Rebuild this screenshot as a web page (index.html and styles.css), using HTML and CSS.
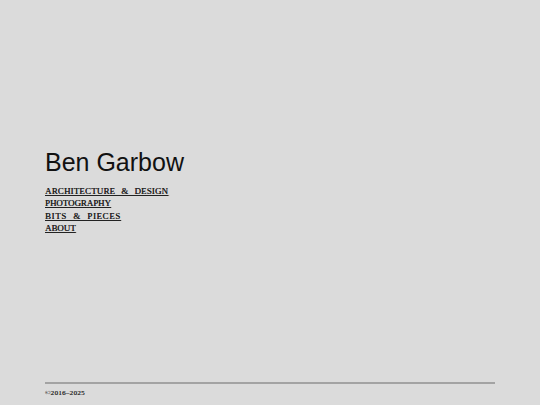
FILE: index.html
```html
<!DOCTYPE html>
<html lang="en">
<head>
<meta charset="utf-8">
<title>Ben Garbow</title>
<link rel="stylesheet" href="styles.css">
</head>
<body>
<div class="page">
  <main class="main">
    <h1 class="title">Ben Garbow</h1>
    <nav class="menu">
      <a href="#" class="menu-link menu-link--arch">ARCHITECTURE &amp; DESIGN</a>
      <a href="#" class="menu-link">PHOTOGRAPHY</a>
      <a href="#" class="menu-link menu-link--bits">BITS &amp; PIECES</a>
      <a href="#" class="menu-link">ABOUT</a>
    </nav>
  </main>
  <footer class="footer">
    <span class="copy">©2016–2025</span>
  </footer>
</div>
</body>
</html>
```

FILE: styles.css
```css
html, body {
  margin: 0;
  padding: 0;
  background: #dbdbdb;
}
.page {
  box-sizing: border-box;
  height: 405px;
  padding: 0 45px;
  display: flex;
  flex-direction: column;
}
.main {
  flex: 1;
  padding-top: 147px;
}
.title {
  margin: 0;
  font-family: "Liberation Sans", Arial, sans-serif;
  font-weight: normal;
  font-size: 25px;
  line-height: 30px;
  color: #111;
}
.menu {
  margin-top: 8px;
  display: flex;
  flex-direction: column;
  align-items: flex-start;
}
.menu-link {
  font-family: "Liberation Serif", "Times New Roman", serif;
  font-size: 8.9px;
  line-height: 12.3px;
  letter-spacing: 0;
  word-spacing: 3.6px;
  color: #222;
  text-decoration: underline;
  text-shadow: 0.25px 0 0 #222;
}
.menu-link--arch {
  letter-spacing: 0.22px;
}
.menu-link--bits {
  letter-spacing: 0.65px;
}
.footer {
  border-top: 2px solid #a3a3a3;
  padding: 5px 0 8px;
}
.copy {
  font-family: "Liberation Serif", "Times New Roman", serif;
  font-size: 7px;
  line-height: 8px;
  letter-spacing: 0.3px;
  color: #333;
  display: block;
  text-shadow: 0.25px 0 0 #333;
}
```
